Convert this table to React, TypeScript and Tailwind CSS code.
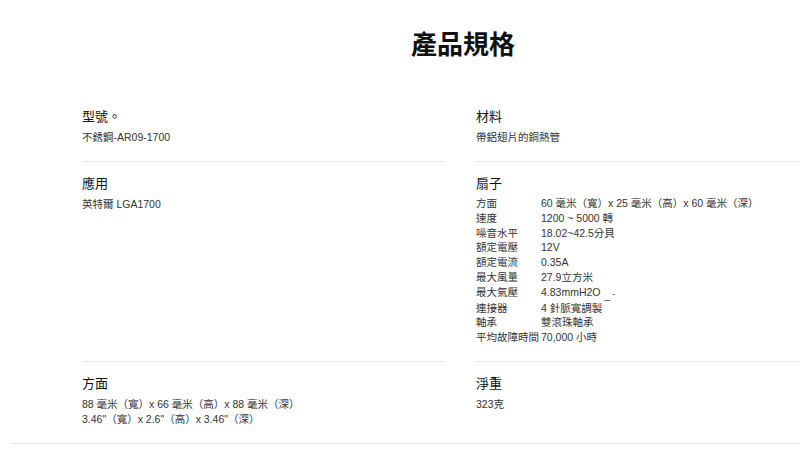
const FONT = "font-['Liberation_Sans','Noto_Sans_CJK_TC',sans-serif]";

const fanSpecs: [string, React.ReactNode][] = [
  ["方面", "60 毫米（寬）x 25 毫米（高）x 60 毫米（深）"],
  ["速度", "1200 ~ 5000 轉"],
  ["噪音水平", "18.02~42.5分貝"],
  ["額定電壓", "12V"],
  ["額定電流", "0.35A"],
  ["最大風量", "27.9立方米"],
  [
    "最大氣壓",
    <>
      4.83mmH2O
      <span className="ml-[4px] inline-block translate-y-[3px] text-[10px]">_</span>
      <span className="ml-[2px] inline-block translate-y-[1px] text-[10px] text-[#777]">-</span>
    </>,
  ],
  ["連接器", "4 針脈寬調製"],
  ["軸承", "雙滾珠軸承"],
  ["平均故障時間", "70,000 小時"],
];

function Cell({
  title,
  children,
  last = false,
}: {
  title: string;
  children: React.ReactNode;
  last?: boolean;
}) {
  return (
    <div className={`pt-[14px] pb-[16px] ${last ? "" : "border-b border-[#e6e6e6]"}`}>
      <h3 className="text-[13px] leading-[16px] text-[#111]">{title}</h3>
      <div className="mt-[5px] text-[10.5px] leading-[15px] text-[#333]">{children}</div>
    </div>
  );
}

export default function App() {
  return (
    <div className={`h-[472px] w-full overflow-hidden bg-white ${FONT}`}>
      <div className="ml-[10px] w-[900px] border-b border-[#e6e6e6]">
        <div className="mx-[72px]">
          <h1 className="pt-[30px] pl-[6px] text-center text-[26px] font-bold leading-[30px] text-[#111]">
            產品規格
          </h1>
          <div className="mt-[35px] grid grid-cols-2 gap-x-[32px]">
            <Cell title="型號。">不銹鋼-AR09-1700</Cell>
            <Cell title="材料">帶鋁翅片的銅熱管</Cell>
            <Cell title="應用">英特爾 LGA1700</Cell>
            <Cell title="扇子">
              <div className="mt-[-1px]">
                {fanSpecs.map(([label, value]) => (
                  <div key={label} className="flex whitespace-nowrap leading-[14.8px]">
                    <span className="w-[65px] shrink-0">{label}</span>
                    <span>{value}</span>
                  </div>
                ))}
              </div>
            </Cell>
            <Cell title="方面" last>
              <p>88 毫米（寬）x 66 毫米（高）x 88 毫米（深）</p>
              <p>3.46"（寬）x 2.6"（高）x 3.46"（深）</p>
            </Cell>
            <Cell title="淨重" last>
              323克
            </Cell>
          </div>
        </div>
      </div>
    </div>
  );
}
